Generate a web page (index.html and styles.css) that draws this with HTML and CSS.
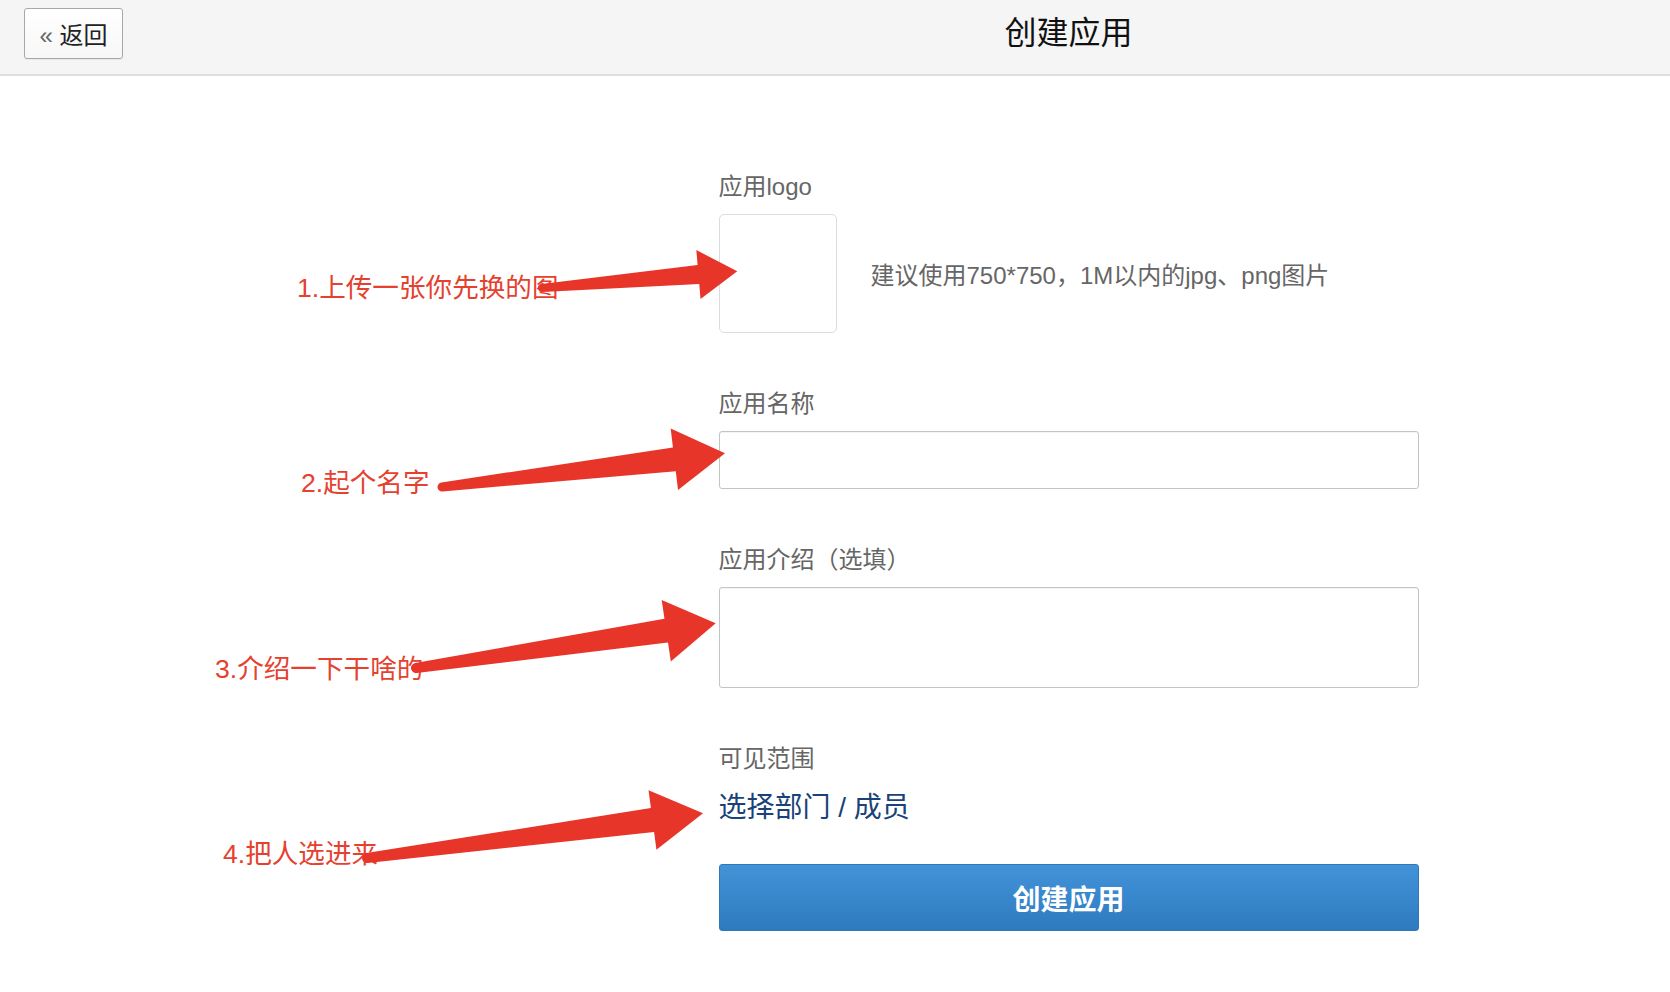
FILE: index.html
```html
<!DOCTYPE html>
<html lang="zh-CN">
<head>
    <meta charset="UTF-8">
    <meta name="viewport" content="width=device-width, initial-scale=1.0">
    <title>创建应用</title>
    <link rel="stylesheet" href="styles.css">
</head>
<body>

    <header class="topbar">
        <div class="topbar-side">
            <button class="back-btn" type="button"><span class="back-icon">«</span> 返回</button>
        </div>
        <h1 class="topbar-title">创建应用</h1>
    </header>

    <main class="page">
        <div class="page-side"></div>
        <form class="app-form">
            <div class="field">
                <label class="field-label">应用logo</label>
                <div class="logo-row">
                    <div class="logo-box"></div>
                    <span class="logo-hint">建议使用750*750，1M以内的jpg、png图片</span>
                </div>
            </div>
            <div class="field">
                <label class="field-label">应用名称</label>
                <input class="text-input" type="text">
            </div>
            <div class="field">
                <label class="field-label">应用介绍（选填）</label>
                <textarea class="text-area"></textarea>
            </div>
            <div class="field">
                <label class="field-label">可见范围</label>
                <a class="scope-link" href="#">选择部门 / 成员</a>
            </div>
            <button class="submit-btn" type="button">创建应用</button>
        </form>
    </main>

    <!-- annotations drawn over the page -->
    <div class="note note-1">1.上传一张你先换的图</div>
    <div class="note note-2">2.起个名字</div>
    <div class="note note-3">3.介绍一下干啥的</div>
    <div class="note note-4">4.把人选进来</div>
    <svg class="arrows" width="1670" height="992" viewBox="0 0 1670 992">
        <g fill="#e8352a">
            <path transform="translate(542,288) rotate(-4.93)" d="M0,-4 L157,-9.5 L157,-24.5 L196,0 L157,24.5 L157,9.5 L0,4 A4,4 0 0 1 0,-4 Z"/>
            <path transform="translate(442,487) rotate(-6.8)" d="M0,-4.5 L234,-12 L234,-31 L285,0 L234,31 L234,12 L0,4.5 A4.5,4.5 0 0 1 0,-4.5 Z"/>
            <path transform="translate(416,668) rotate(-8.47)" d="M0,-5 L253,-12 L253,-31 L303,0 L253,31 L253,12 L0,5 A5,5 0 0 1 0,-5 Z"/>
            <path transform="translate(367,858) rotate(-7.58)" d="M0,-5 L288,-12 L288,-30 L339,0 L288,30 L288,12 L0,5 A5,5 0 0 1 0,-5 Z"/>
        </g>
    </svg>

</body>
</html>
```

FILE: styles.css
```css
body {
    margin: 0;
    font-family: "Liberation Sans", "Noto Sans CJK SC", sans-serif;
    background-color: #fff;
    color: #333;
}
.topbar {
    display: grid;
    grid-template-columns: 467px 1fr;
    height: 74px;
    background-color: #f5f5f5;
    border-bottom: 2px solid #dedede;
}
.back-btn {
    margin: 8px 0 0 24px;
    width: 99px;
    height: 51px;
    padding: 0;
    font-family: inherit;
    font-size: 24px;
    color: #222;
    background: linear-gradient(#fff, #f7f7f7);
    border: 1px solid #a8a8a8;
    border-radius: 3px;
    box-shadow: 0 1px 1px rgba(0,0,0,0.06);
}
.back-icon {
    font-size: 24px;
    color: #666;
}
.topbar-title {
    margin: 13px 0 0 0;
    font-size: 32px;
    line-height: 40px;
    font-weight: normal;
    color: #111;
    text-align: center;
}
.page {
    display: grid;
    grid-template-columns: 467px 1fr;
}
.app-form {
    width: 700px;
    margin: 0 auto;
    padding-top: 94px;
}
.field {
    margin-bottom: 54px;
}
.field:last-of-type {
    margin-bottom: 0;
}
.field-label {
    display: block;
    font-size: 24px;
    line-height: 34px;
    color: #666;
    margin-bottom: 10px;
}
.logo-row {
    display: flex;
    align-items: center;
    gap: 34px;
}
.logo-box {
    width: 118px;
    height: 119px;
    box-sizing: border-box;
    border: 1px solid #dcdcdc;
    border-radius: 5px;
}
.logo-hint {
    font-size: 24px;
    color: #666;
}
.text-input, .text-area {
    display: block;
    width: 100%;
    box-sizing: border-box;
    border: 1px solid #c4c4c4;
    border-radius: 3px;
    box-shadow: inset 0 1px 1px rgba(0,0,0,0.05);
    font-family: inherit;
    font-size: 22px;
    margin: 0;
}
.text-input {
    height: 58px;
}
.text-area {
    height: 101px;
    resize: none;
}
.scope-link {
    display: block;
    font-size: 28px;
    line-height: 44px;
    color: #1a4278;
    text-decoration: none;
}
.submit-btn {
    display: block;
    width: 100%;
    height: 67px;
    margin-top: 34px;
    font-family: inherit;
    font-size: 28px;
    font-weight: bold;
    color: #fff;
    background: linear-gradient(#4393d8, #2e7abf);
    border: 1px solid #2f78b9;
    border-radius: 3px;
}
.note {
    position: absolute;
    font-size: 26.6px;
    line-height: 26px;
    color: #e5412f;
    white-space: nowrap;
}
.note-1 {
    left: 297px;
    top: 275px;
}
.note-2 {
    left: 301px;
    top: 470px;
}
.note-3 {
    left: 215px;
    top: 656px;
}
.note-4 {
    left: 223px;
    top: 841px;
}
.arrows {
    position: absolute;
    top: 0;
    left: 0;
    pointer-events: none;
}
```
